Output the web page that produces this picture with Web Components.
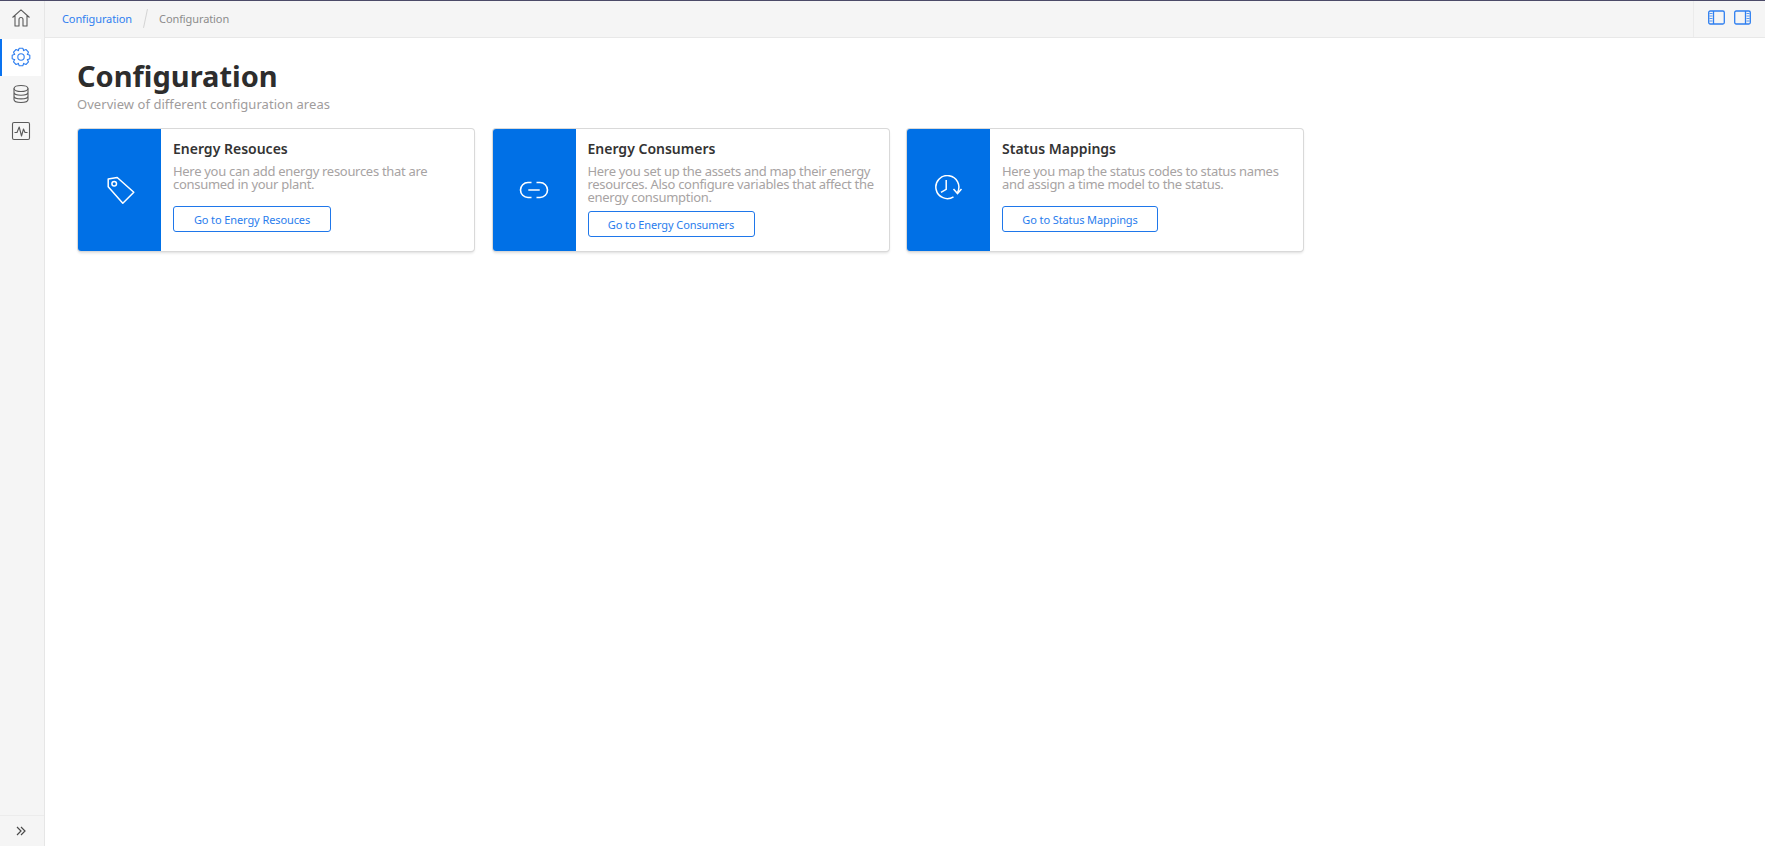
<!DOCTYPE html>
<html lang="en"><head><meta charset="utf-8"><title>Configuration</title>
<style>
html,body{margin:0;height:100%;background:#fff;font-family:"Noto Sans","Open Sans",sans-serif;overflow:hidden}
</style></head><body>
<app-shell>
  <side-nav slot="nav"></side-nav>
  <top-bar slot="top"></top-bar>
  <page-head title-text="Configuration" sub="Overview of different configuration areas"></page-head>
  <card-row>
    <info-card icon="tag" heading="Energy Resouces" action="Go to Energy Resouces" btn="158">Here you can add energy resources that are consumed in your plant.</info-card>
    <info-card icon="link" heading="Energy Consumers" action="Go to Energy Consumers" btn="167" tight>Here you set up the assets and map their energy resources. Also configure variables that affect the energy consumption.</info-card>
    <info-card icon="clock" heading="Status Mappings" action="Go to Status Mappings" btn="156">Here you map the status codes to status names and assign a time model to the status.</info-card>
  </card-row>
</app-shell>
<script>
const def=(n,html,init)=>{customElements.define(n,class extends HTMLElement{constructor(){super();this.attachShadow({mode:'open'}).innerHTML=html;}connectedCallback(){init&&init.call(this)}})};
const gear=(()=>{let d='';const cx=10,cy=10,n=8;for(let i=0;i<n;i++){const a=i/n*2*Math.PI-Math.PI/2;const pts=[[6.9,-.42],[9,-.2],[9,.2],[6.9,.42]];pts.forEach(([r,o],j)=>{const x=cx+r*Math.cos(a+o),y=cy+r*Math.sin(a+o);d+=(i===0&&j===0?'M':'L')+x.toFixed(2)+' '+y.toFixed(2)});}return d+'z'})();
const ICONS={
 tag:'<path d="M3.200 4 12.200 2.500 28.800 17.300 17.800 28.300 3.200 11.700z" fill="none" stroke="#fff" stroke-width="1.500" stroke-linejoin="round"/><circle cx="9.200" cy="8.700" r="2.300" fill="none" stroke="#fff" stroke-width="1.500"/>',
 link:'<path d="M12.500 7.500H9a7.500 7.500 0 0 0 0 15h3.500M17.500 7.500H21a7.500 7.500 0 0 1 0 15h-3.500" fill="none" stroke="#fff" stroke-width="1.600"/><path d="M9.300 15h11.400" stroke="#fff" stroke-width="1.600"/>',
 clock:'<path d="M19.500 21.800A11.500 11.500 0 1 1 23.500 17.500" fill="none" stroke="#fff" stroke-width="1.500"/><path d="M12.200 5v9.300L7 17.300" fill="none" stroke="#fff" stroke-width="1.500"/><path d="M19.500 14l4 4.500 4-4.500" fill="none" stroke="#fff" stroke-width="1.500"/>'
};
def('app-shell',`<style>
:host{display:grid;grid-template-columns:45px 1fr;grid-template-rows:37px 1fr;height:100vh;box-sizing:border-box;border-top:1px solid #4b4a68}
::slotted(side-nav){grid-row:1/3}
.main{padding:19px 0 0 32px;min-width:0}
</style><slot name="nav"></slot><slot name="top"></slot><div class="main"><slot></slot></div>`);
def('side-nav',`<style>
:host{display:flex;flex-direction:column;background:#f5f5f5;border-right:1px solid #e6e6e6;box-sizing:border-box;height:100%}
.i{height:37px;display:flex;align-items:center;justify-content:center;width:41px;box-sizing:border-box;padding-bottom:2px}
.i svg{width:20px;height:20px;fill:none;stroke:#5a5a5a;stroke-width:1.100;stroke-linejoin:round}
.home{height:34px;margin-bottom:4px;padding:0}
.on{background:#fff;border-left:2px solid #0a73f0;padding-right:2px}
.on svg{stroke:#2f7ff0}
.sp{flex:1}
.foot{height:31px;border-top:1px solid #ececec;display:flex;align-items:center;justify-content:center;width:100%;padding:0 3px 0 0;box-sizing:border-box}
.foot svg{width:10px;height:10px;fill:none;stroke:#4a4a4a;stroke-width:1.200}
</style>
<div class="i home"><svg viewBox="0 0 20 20"><path d="M1.500 9.500 10 1.800l8.500 7.700M4 7.500V18h4v-6.500a2 2 0 0 1 4 0V18h4V7.500"/></svg></div>
<div class="i on"><svg viewBox="0 0 20 20"><path id="g"/><circle cx="10" cy="10" r="3.200"/></svg></div>
<div class="i"><svg viewBox="0 0 20 20"><ellipse cx="10" cy="4.500" rx="7" ry="3"/><path d="M3 4.500v11c0 1.700 3.200 3 7 3s7-1.300 7-3v-11M3 8.200c0 1.700 3.200 3 7 3s7-1.300 7-3M3 11.900c0 1.700 3.200 3 7 3s7-1.300 7-3"/></svg></div>
<div class="i"><svg viewBox="0 0 20 20"><rect x="1.500" y="1.500" width="17" height="17" rx="1.500"/><path d="M3.500 11.500H6l2.200-5.500 2.300 9 2-7 1.500 3.500h2.500"/></svg></div>
<div class="sp"></div>
<div class="foot"><svg viewBox="0 0 10 10"><path d="M1 1l4 4-4 4M5 1l4 4-4 4"/></svg></div>`,function(){this.shadowRoot.getElementById('g').setAttribute('d',gear)});
def('top-bar',`<style>
:host{display:flex;align-items:center;background:#f5f5f5;border-bottom:1px solid #e8e8e8;box-sizing:border-box;height:37px;font-size:11px;letter-spacing:-.1px;padding:0 0 2px 17px}
a{color:#2f7ff0;text-decoration:none}
.s{width:1px;height:19px;background:#d4d4d4;transform:rotate(12deg);margin:0 13px}
.c{color:#8c8c8c}
.sp{flex:1}
.tools{align-self:stretch;display:flex;align-items:center;gap:9px;border-left:1px solid #ebebeb;padding:0 14px 0 14px;margin-bottom:-2px}
svg{width:17px;height:15px;fill:none;stroke:#2f7ff0;stroke-width:1.300;display:block;margin-top:-3px}
.h{stroke-width:1;opacity:.8}
</style><a>Configuration</a><span class="s"></span><span class="c">Configuration</span><span class="sp"></span>
<div class="tools"><svg viewBox="0 0 17 15"><rect x=".7" y="1" width="15.600" height="13" rx="1.500"/><path d="M5.500 1v13"/><path class="h" d="M1.500 3.500h3M1.500 6h3M1.500 8.500h3M1.500 11h3"/></svg><svg viewBox="0 0 17 15"><rect x=".7" y="1" width="15.600" height="13" rx="1.500"/><path d="M11.500 1v13"/><path class="h" d="M12.500 3.500h3M12.500 6h3M12.500 8.500h3M12.500 11h3"/></svg></div>`);
def('page-head',`<style>
:host{display:block;margin-bottom:17px}
h1{margin:0;font-size:29px;line-height:37px;font-weight:700;color:#2d2d2d}
p{margin:2px 0 0;font-size:13px;line-height:16px;color:#a09c9c;letter-spacing:.05px}
</style><h1></h1><p></p>`,function(){this.shadowRoot.querySelector('h1').textContent=this.getAttribute('title-text');this.shadowRoot.querySelector('p').textContent=this.getAttribute('sub')});
def('card-row',`<style>:host{display:flex;gap:18.500px;margin-left:1px}</style><slot></slot>`);
def('info-card',`<style>
:host{display:flex;width:396px;height:122px;box-sizing:border-box;background:#fff;border-radius:3px;box-shadow:0 0 0 1px #d9d9d9,0 2px 3px rgba(0,0,0,.14);overflow:hidden;flex:none}
.b{width:83px;background:#0070e6;display:flex;align-items:center;justify-content:center;flex:none}
.b svg{width:30px;height:30px}
.t{padding:11px 10px 0 12px;display:flex;flex-direction:column;align-items:flex-start;min-width:0}
h3{margin:0;font-size:14px;line-height:18px;font-weight:600;color:#333}
p{margin:7px 0 0;font-size:13px;line-height:13px;color:#a7a3a3;letter-spacing:-.3px}
button{margin-top:15px;height:26px;box-sizing:border-box;background:#fff;border:1px solid #1f77ea;border-radius:3px;color:#2a7ded;font:11px "Noto Sans","Open Sans",sans-serif;letter-spacing:-.1px;padding:0;cursor:pointer}
:host([tight]) button{margin-top:7px}
</style><div class="b"><svg viewBox="0 0 30 30"></svg></div><div class="t"><h3></h3><p><slot></slot></p><button></button></div>`,function(){const s=this.shadowRoot;s.querySelector('svg').innerHTML=ICONS[this.getAttribute('icon')];s.querySelector('h3').textContent=this.getAttribute('heading');const b=s.querySelector('button');b.textContent=this.getAttribute('action');b.style.width=this.getAttribute('btn')+'px'});
</script>
</body></html>
